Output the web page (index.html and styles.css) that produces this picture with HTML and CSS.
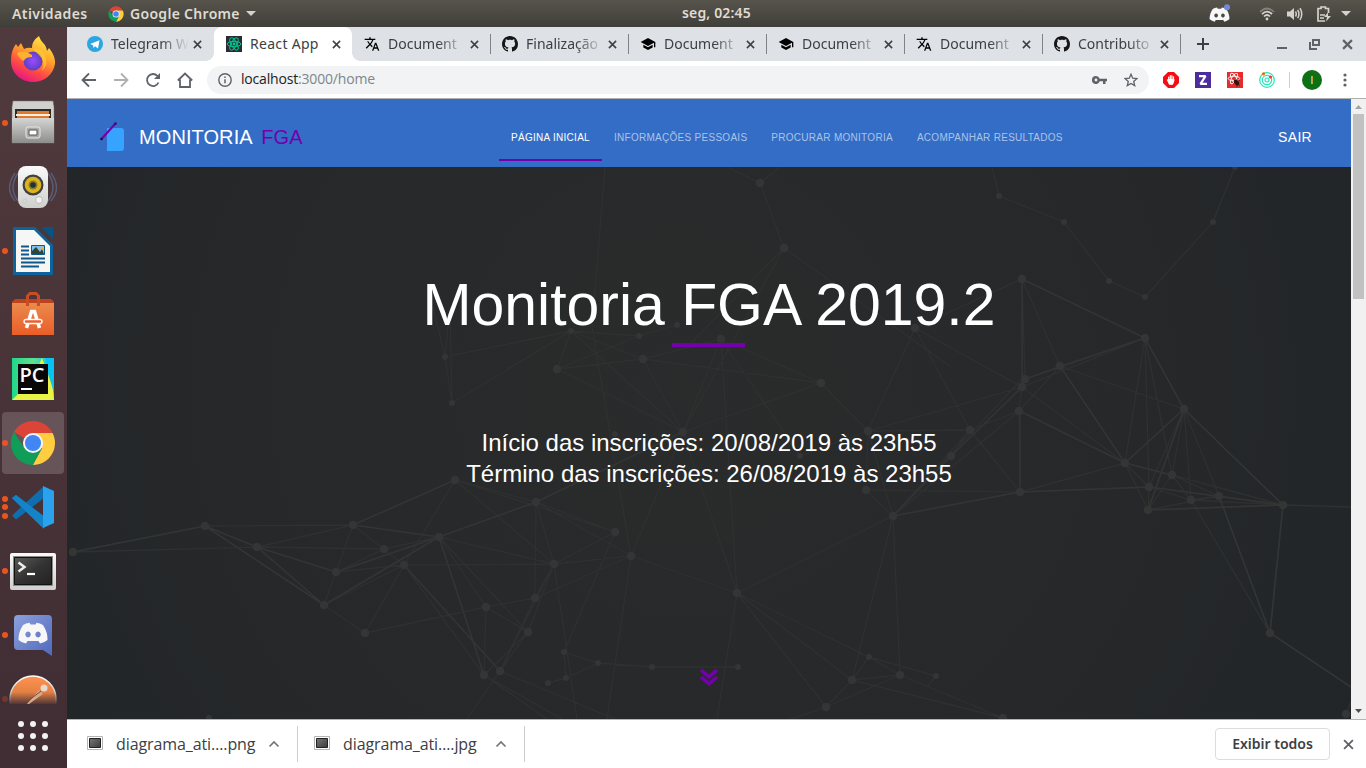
FILE: index.html
```html
<!DOCTYPE html>
<html lang="pt-BR">
<head>
<meta charset="utf-8">
<title>React App</title>
<link rel="stylesheet" href="styles.css">
</head>
<body>
<svg class="defs" width="0" height="0">
  <defs>
    <linearGradient id="ffo" x1=".8" y1="0" x2=".3" y2="1"><stop offset="0" stop-color="#fff04f"/><stop offset=".4" stop-color="#ffa52a"/><stop offset=".72" stop-color="#ff4a43"/><stop offset="1" stop-color="#e5138a"/></linearGradient>
    <radialGradient id="ffp"><stop offset="0" stop-color="#9a4dff"/><stop offset="1" stop-color="#5b3fc4"/></radialGradient>
    <linearGradient id="silver" x1="0" y1="0" x2="0" y2="1"><stop offset="0" stop-color="#d5d5d4"/><stop offset="1" stop-color="#8d8d8c"/></linearGradient>
    <linearGradient id="white" x1="0" y1="0" x2="0" y2="1"><stop offset="0" stop-color="#fafafa"/><stop offset="1" stop-color="#cfcfcd"/></linearGradient>
    <linearGradient id="bag" x1="0" y1="0" x2="0" y2="1"><stop offset="0" stop-color="#ea8a4d"/><stop offset="1" stop-color="#ea5e28"/></linearGradient>
    <linearGradient id="term" x1="0" y1="0" x2="1" y2="1"><stop offset="0" stop-color="#5a5a59"/><stop offset=".5" stop-color="#333"/><stop offset="1" stop-color="#222"/></linearGradient>
    <linearGradient id="thumbnail" x1="0" y1="0" x2="1" y2="1"><stop offset="0" stop-color="#777"/><stop offset="1" stop-color="#3a3a3a"/></linearGradient>
    <linearGradient id="disc" x1="0" y1="0" x2="1" y2="1"><stop offset="0" stop-color="#8ca0dc"/><stop offset="1" stop-color="#5069bb"/></linearGradient>
    <linearGradient id="pyc" x1="0" y1="0" x2="1" y2="0"><stop offset="0" stop-color="#21d789"/><stop offset=".5" stop-color="#5fe08e"/><stop offset="1" stop-color="#07c3f2"/></linearGradient>
    <linearGradient id="post" x1="0" y1="0" x2="0" y2="1"><stop offset="0" stop-color="#ff9350"/><stop offset=".35" stop-color="#e58043"/><stop offset=".62" stop-color="#4a3336"/></linearGradient>
    <linearGradient id="postring" x1="0" y1="0" x2="0" y2="1"><stop offset="0" stop-color="#fff"/><stop offset=".35" stop-color="#ccc"/><stop offset=".62" stop-color="#4a3336"/></linearGradient>
  </defs>
  <symbol id="chrome" viewBox="0 0 48 48">
    <path d="M24 24 4.100 12.500A23 23 0 0 1 43.900 12.500L44 13.500H24z" fill="#db4437"/>
    <path d="M24 13.500H44.400A23 23 0 0 1 23.800 47L33.500 29.200z" fill="#ffcd40"/>
    <path d="M4.100 12.500A23 23 0 0 0 23.800 47L33.300 29.400 24 34.500 14.900 29.300z" fill="#0f9d58"/>
    <circle cx="24" cy="24" r="10.500" fill="#f5f5f5"/><circle cx="24" cy="24" r="8.400" fill="#4285f4"/>
  </symbol>
  <symbol id="x" viewBox="0 0 10 10"><path d="M1 1 9 9M9 1 1 9" fill="none" stroke="currentColor" stroke-width="1.700"/></symbol>
  <symbol id="translate" viewBox="0 0 24 24"><path d="M12.87 15.07l-2.54-2.51.03-.03A17.52 17.52 0 0 0 14.07 6H17V4h-7V2H8v2H1v1.99h11.17C11.5 7.92 10.44 9.75 9 11.35 8.07 10.32 7.3 9.19 6.69 8h-2c.73 1.63 1.73 3.17 2.98 4.56l-5.09 5.02L4 19l5-5 3.11 3.11.76-2.04zM18.5 10h-2L12 22h2l1.12-3h4.75L21 22h2l-4.5-12zm-2.62 7l1.62-4.33L19.12 17h-3.24z"/></symbol>
  <symbol id="github" viewBox="0 0 16 16"><path fill="#161616" d="M8 0C3.58 0 0 3.58 0 8c0 3.54 2.29 6.53 5.47 7.59.4.07.55-.17.55-.38 0-.19-.01-.82-.01-1.49-2.01.37-2.53-.49-2.69-.94-.09-.23-.48-.94-.82-1.13-.28-.15-.68-.52-.01-.53.63-.01 1.08.58 1.23.82.72 1.21 1.87.87 2.33.66.07-.52.28-.87.51-1.07-1.78-.2-3.64-.89-3.64-3.95 0-.87.31-1.59.82-2.15-.08-.2-.36-1.02.08-2.12 0 0 .67-.21 2.2.82.64-.18 1.32-.27 2-.27s1.36.09 2 .27c1.53-1.04 2.2-.82 2.2-.82.44 1.1.16 1.92.08 2.12.51.56.82 1.27.82 2.15 0 3.07-1.87 3.75-3.65 3.95.29.25.54.73.54 1.48 0 1.07-.01 1.93-.01 2.2 0 .21.15.46.55.38A8.01 8.01 0 0 0 16 8c0-4.42-3.58-8-8-8z"/></symbol>
  <symbol id="school" viewBox="0 0 24 24"><path d="M5 13.18v4L12 21l7-3.82v-4L12 17l-7-3.82zM12 3 1 9l11 6 9-4.91V17h2V9L12 3z"/></symbol>
  <symbol id="clyde" viewBox="0 0 30 22"><path fill="#f7f7f7" fill-rule="evenodd" d="M5 3Q8 1 11.500 .8L12.500 2.500H17.500L18.500 .8Q22 1 25 3Q30 11 29.500 18Q26 21 22 21.500L20.500 19H9.500L8 21.500Q4 21 .5 18Q0 11 5 3ZM10 9.500a2.700 3 0 1 0 .1 0zM20 9.500a2.700 3 0 1 0 .1 0z"/></symbol>
  <symbol id="file" viewBox="0 0 16 14"><path fill="#fff" stroke="#b4b4b4" d="M.5.5h15v13H.5z"/><path fill="url(#thumbnail)" stroke="#222" d="M2.500 2.500h11v9h-11z"/></symbol>
  <symbol id="up" viewBox="0 0 12 8"><path d="M1.500 6.500 6 2l4.500 4.500" fill="none" stroke="#757575" stroke-width="1.700"/></symbol>
</svg>

<header class="topbar">
  <span class="activities">Atividades</span>
  <svg class="i16"><use href="#chrome"/></svg>
  <span class="appname">Google Chrome</span>
  <svg class="caret" viewBox="0 0 10 5"><path d="M0 0h10L5 5z"/></svg>
  <span class="clock">seg, 02:45</span>
  <div class="tray">
    <svg width="22" height="20" viewBox="0 0 22 20"><use href="#clyde" x="0" y="3" width="21" height="15"/><circle cx="18" cy="3.200" r="3" fill="#7289da"/></svg>
    <svg class="wifi" width="16" height="14" viewBox="0 0 16 14" fill="none" stroke="#d4d2cc" stroke-width="1.700"><path d="M1 5Q8-2 15 5" opacity=".4"/><path d="M3 7.200Q8 2 13 7.200"/><path d="M5 9.500Q8 6.500 11 9.500"/><circle cx="8" cy="12" r="1.400" fill="#d4d2cc" stroke="none"/></svg>
    <svg class="vol" width="16" height="14" viewBox="0 0 16 14" fill="none" stroke="#d4d2cc" stroke-width="1.500"><path d="M0 4.500h3L7 1v12L3 9.500H0z" fill="#d4d2cc" stroke="none"/><path d="M8.500 4.500q1.500 2.500 0 5M10.700 2.800q2.500 4.200 0 8.400M13 1.200q3.500 5.800 0 11.600"/></svg>
    <svg class="bat" width="14" height="16" viewBox="0 0 14 16" fill="none" stroke="#d4d2cc" stroke-width="1.700"><path d="M11.500 7V2.500H8.500V1H4v1.500H1V15h7M3 9h5M3 12h4"/><path d="M11 6.500 7 11h3l-1 4.500 5-5.500h-3z" fill="#d4d2cc" stroke="none"/></svg>
    <svg class="caret" viewBox="0 0 10 5"><path d="M0 0h10L5 5z"/></svg>
  </div>
</header>

<div class="desktop">
<nav class="dock">
  <div class="app"><svg viewBox="0 0 48 48"><path fill="url(#ffo)" d="M2 26C2 18 4 13 7 9L9 12 12 8 15 14Q19 12 23 13C23 7 26 4 30 1 32 8 37 8 38 16L40 13C45 19 46.500 25 46 29 44 40 35 47 24 47 12 47 2 38 2 26z"/><circle cx="24" cy="26" r="9.500" fill="url(#ffp)"/><path fill="#ffb02f" d="M8 18Q14 14 23 20L23 22Q16 22 15 26 9 23 8 18z"/><path fill="#ffc531" d="M24 14Q32 12 36 20 40 29 33 36 37 26 30 20 27 17 24 14z" opacity=".8"/></svg></div>
  <div class="app run"><svg viewBox="0 0 48 48"><path d="M4 2h40l1 6v36H3V8z" fill="#d0d0cf" stroke="#777" stroke-width=".5"/><path d="M6 10h36v10H6z" fill="#2c2a28"/><path d="M8 12h32v7H8z" fill="#e07a28"/><path d="M7 15h34v2H7z" fill="#f4efe6"/><path d="M3 19h42v25H3z" fill="url(#silver)"/><rect x="17" y="28" width="14" height="11" rx="2" fill="#aaa" stroke="#e9e9e9"/><path d="M20 31h8v5h-8z" fill="#fff" stroke="#555"/></svg></div>
  <div class="app"><svg viewBox="0 0 48 48"><path d="M6 10Q-5 25 6 38M9 10Q-1 25 9 38M42 10Q53 25 42 38M39 10Q49 25 39 38" stroke="#64779f" stroke-width="1.500" fill="none" opacity=".6"/><rect x="9" y="3" width="30" height="42" rx="8" fill="url(#white)"/><circle cx="24" cy="22" r="10.500" fill="#40413f"/><circle cx="24" cy="22" r="8.300" fill="#d9b51b"/><circle cx="24" cy="22" r="4.500" fill="#8b7b2a"/><circle cx="24" cy="22" r="2.800" fill="#26303a"/><circle cx="30" cy="37" r="3.500" fill="#f2f2f2" stroke="#bbb"/><circle cx="16" cy="38" r="2" fill="none" stroke="#ccc"/></svg></div>
  <div class="app run"><svg viewBox="0 0 48 48"><path d="M4 0h22l18 18v30H4z" fill="#0d639e"/><path d="M32 0h12v12z" fill="#075588"/><path d="M7 3h18l16 16v26H7z" fill="#f6f6f5"/><path d="M12 19.500h8M12 23.500h8M12 27.500h8M12 31.500h24M12 35.500h24M12 39.500h18" stroke="#115789" stroke-width="2"/><path d="M22.500 18.500h13v9h-13z" fill="#7ec2ed" stroke="#115789"/><path d="M23 27v-3l4-4 4 5 2-3 2 5z" fill="#343"/><circle cx="33" cy="21" r="1.500" fill="#fa3"/></svg></div>
  <div class="app"><svg viewBox="0 0 48 48"><path d="M3 11l3-3h36l3 3v33H3z" fill="#bd431d"/><path d="M3 12h42v32H3z" fill="url(#bag)"/><path d="M18.500 15V5l2.500-2.500h6L29.500 5v10" fill="none" stroke="#c94c22" stroke-width="3"/><path d="M17.500 37 22.500 20.500h3L30.500 37" fill="none" stroke="#fff" stroke-width="3.500"/><rect x="15" y="28.500" width="18" height="4" rx="2" fill="#e8602e" stroke="#fff" stroke-width="1.300"/></svg></div>
  <div class="app"><svg viewBox="0 0 48 48"><path d="M3 3h42v42H3z" fill="url(#pyc)"/><path d="M33 3 44 33 45 45H3L23 25z" fill="#e7f445"/><path d="M36 3h9v36z" fill="#07c3f2"/><path d="M9 9h30v30H9z" fill="#080808"/><path d="M12 34h11" stroke="#fff" stroke-width="2"/><text x="10.500" y="26.500" class="pc">PC</text></svg></div>
  <div class="app run current"><svg viewBox="0 0 48 48"><use href="#chrome" x="1" y="1" width="46" height="46"/></svg></div>
  <div class="app run run3"><svg viewBox="0 0 48 48"><path d="M3 15 7 12 35 34V46z" fill="#1679b9"/><path d="M3 32.500 7 36.500 35 15V3z" fill="#0e6eaf"/><path d="M3 15 7 12 36 34 33 44z" fill="#1484c8"/><path d="M34 3 45 8V40L34 45z" fill="#2ba2ed"/></svg></div>
  <div class="app run"><svg viewBox="0 0 48 48"><rect x="1" y="6" width="46" height="37" rx="2" fill="url(#white)"/><path d="M4 9h40v30H4z" fill="#8b8b89"/><path d="M5.500 10.500h37v27h-37z" fill="url(#term)" stroke="#111"/><path d="M9.500 15.500 15.500 20l-6 4.500" fill="none" stroke="#eee" stroke-width="2.500"/><path d="M18 27h8" stroke="#fff" stroke-width="2.200"/></svg></div>
  <div class="app run"><svg viewBox="0 0 48 48"><path d="M9 4h30q4 0 4 4v37l-9-6H9q-4 0-4-4V8q0-4 4-4z" fill="url(#disc)"/><use href="#clyde" x="9" y="11" width="30" height="22"/></svg></div>
  <div class="app last"><svg viewBox="0 0 48 48"><circle cx="24" cy="24" r="23" fill="url(#post)" stroke="url(#postring)" stroke-width="1.500"/><path d="M18 29 30 15l4 4-14 10z" fill="#d5a98c"/><circle cx="35" cy="13" r="3.500" fill="#e8d8cc"/><path d="M19 26 32 16" stroke="#7c4a33"/></svg></div>
  <div class="grid"><i></i><i></i><i></i><i></i><i></i><i></i><i></i><i></i><i></i></div>
</nav>

<main class="window">
  <div class="tabs">
    <div class="tab first nosep"><svg class="i16" viewBox="0 0 16 16"><circle cx="8" cy="8" r="8" fill="#2ca5e0"/><path d="M3.200 8 12.500 4.200 11 12.500 8 10.300 6.500 12 6 9.200z" fill="#fff"/></svg><span>Telegram W</span><svg class="close"><use href="#x"/></svg></div>
    <div class="tab active nosep"><svg class="i16" viewBox="0 0 16 16"><path d="M0 0h16v16H0z" fill="#282c34"/><g fill="none" stroke="#00c98d"><ellipse cx="8" cy="8" rx="6.800" ry="2.700"/><ellipse cx="8" cy="8" rx="6.800" ry="2.700" transform="rotate(60 8 8)"/><ellipse cx="8" cy="8" rx="6.800" ry="2.700" transform="rotate(120 8 8)"/></g><circle cx="8" cy="8" r="1.400" fill="#00c98d"/></svg><span>React App</span><svg class="close"><use href="#x"/></svg></div>
    <div class="tab"><svg class="i16"><use href="#translate"/></svg><span>Document</span><svg class="close"><use href="#x"/></svg></div>
    <div class="tab"><svg class="i16"><use href="#github"/></svg><span>Finalização</span><svg class="close"><use href="#x"/></svg></div>
    <div class="tab"><svg class="i16"><use href="#school"/></svg><span>Document</span><svg class="close"><use href="#x"/></svg></div>
    <div class="tab"><svg class="i16"><use href="#school"/></svg><span>Document</span><svg class="close"><use href="#x"/></svg></div>
    <div class="tab"><svg class="i16"><use href="#translate"/></svg><span>Document</span><svg class="close"><use href="#x"/></svg></div>
    <div class="tab"><svg class="i16"><use href="#github"/></svg><span>Contributo</span><svg class="close"><use href="#x"/></svg></div>
    <svg class="plus" viewBox="0 0 12 12"><path d="M6 0v12M0 6h12"/></svg>
    <div class="wm">
      <svg width="10" height="12" viewBox="0 0 10 12"><path d="M0 10h10"/></svg>
      <svg width="11" height="11" viewBox="0 0 11 11"><path d="M4 1h6v5H4zM1 3v7h7"/></svg>
      <svg width="11" height="11" viewBox="0 0 10 10"><path d="M1 1 9 9M9 1 1 9"/></svg>
    </div>
  </div>
  <div class="toolbar">
    <div class="navicons">
      <svg width="16" height="16" viewBox="0 0 16 16"><path d="M15 8H2M8 1.500 1.500 8 8 14.500"/></svg>
      <svg class="off" width="16" height="16" viewBox="0 0 16 16"><path d="M1 8h13M8 1.500 14.500 8 8 14.500"/></svg>
      <svg width="16" height="16" viewBox="0 0 16 16"><path d="M13.500 10.500A6 6 0 1 1 12.500 4"/><path d="M15 1v6H9z" fill="#5f6368" stroke="none"/></svg>
      <svg width="16" height="16" viewBox="0 0 16 16"><path d="M.8 8.500 8 1.500l7.200 7M3 7.500V15h10V7.500"/></svg>
    </div>
    <div class="omnibox">
      <svg width="14" height="14" viewBox="0 0 14 14"><circle cx="7" cy="7" r="6.200" fill="none" stroke="#5f6368" stroke-width="1.400"/><path d="M7 6.200v4M7 3.500v1.500" stroke="#5f6368" stroke-width="1.500"/></svg>
      <span class="url"><b>localhost</b>:3000/home</span>
      <svg class="key" width="15" height="8" viewBox="0 0 15 8"><path d="M4 0a4 4 0 1 0 3.700 5.300H11V8h2.500V5.300H15V2.700H7.700A4 4 0 0 0 4 0zm0 2.600a1.400 1.400 0 1 1 0 2.800 1.400 1.400 0 0 1 0-2.800z" fill="#5f6368"/></svg>
      <svg width="14" height="14" viewBox="0 0 14 14"><path d="M7 1.200 8.700 5.200l4.200.4-3.200 2.800 1 4.200L7 10.400l-3.700 2.200 1-4.200L1.100 5.600l4.200-.4z" fill="none" stroke="#5f6368" stroke-width="1.300"/></svg>
    </div>
    <div class="exts">
      <svg class="i16" viewBox="0 0 16 16"><path d="M5 0h6l5 5v6l-5 5H5l-5-5V5z" fill="#f40d12"/><path d="M5.700 8V5M7.300 8V3.500M8.900 8V3.500M10.500 8V4.800M4.500 8l2 4.200h3L10.800 9V7.500H5.500z" stroke="#fff" stroke-width="1.200" fill="#fff" stroke-linecap="round"/></svg>
      <svg class="i16" viewBox="0 0 16 16"><path d="M0 0h16v16H0z" fill="#4b2d9f"/><path d="M4 4.200h6.500L5.500 11.800H12" fill="none" stroke="#fff" stroke-width="2.200" stroke-linejoin="bevel"/></svg>
      <svg class="i16" viewBox="0 0 16 16"><path d="M0 0h16v16H0z" fill="#e52b2b"/><g fill="none" stroke="#fff" stroke-width=".9"><ellipse cx="7" cy="6.500" rx="5.800" ry="2.300"/><ellipse cx="7" cy="6.500" rx="5.800" ry="2.300" transform="rotate(60 7 6.500)"/><ellipse cx="7" cy="6.500" rx="5.800" ry="2.300" transform="rotate(120 7 6.500)"/></g><ellipse cx="9.500" cy="10.500" rx="2.200" ry="3.200" fill="#311" transform="rotate(-35 9.500 10.500)"/><path d="M6 12l7-4M7 8l6 6M10 7v8" stroke="#311" stroke-width=".7"/></svg>
      <svg class="i16" viewBox="0 0 16 16" fill="none" stroke="#25e5b5" stroke-width="1.200"><circle cx="8" cy="8" r="7.300"/><circle cx="8" cy="8" r="4.700"/><circle cx="8" cy="8" r="2"/><circle cx="4.500" cy="1.800" r="1.600" fill="#f60" stroke="none"/><circle cx="11.500" cy="5" r="1.600" fill="#f33" stroke="none"/></svg>
    </div>
    <div class="vr"></div>
    <div class="avatar">I</div>
    <svg class="more" width="4" height="14" viewBox="0 0 4 14" fill="#5f6368"><circle cx="2" cy="2" r="1.600"/><circle cx="2" cy="7" r="1.600"/><circle cx="2" cy="12" r="1.600"/></svg>
  </div>
  <div class="viewport">
    <div class="page">
      <div class="sitebar">
        <svg class="logo" width="28" height="32" viewBox="0 0 28 32"><path d="M7 6h14q3 0 3 3v17q0 3-3 3H7z" fill="#36a3ff"/><path d="M1.500 17 15.500 1.500" stroke="#7400ad" stroke-width="2.200"/><circle cx="1.500" cy="17" r="1.300" fill="#151525"/><circle cx="15.500" cy="1.500" r="1.300" fill="#301550"/></svg>
        <span class="brand">MONITORIA <em>FGA</em></span>
        <div class="menu"><a class="on">PÁGINA INICIAL</a><a>INFORMAÇÕES PESSOAIS</a><a>PROCURAR MONITORIA</a><a>ACOMPANHAR RESULTADOS</a></div>
        <a class="exit">SAIR</a>
      </div>
      <section class="hero">
        <svg class="net" viewBox="0 0 1284 552">
          <path class="edges" d="M6 385 138 359 190 380 6 385M138 359 286 358 190 380 269 405 257 438 138 359M190 380 317 382 372 370 469 335 388 313 286 358 372 370M190 380 257 438 298 466 337 398 286 358 269 405 317 382M269 405 337 398 487 397 564 389 616 265 576 192 490 202 616 265M269 405 372 370 257 438 337 398 388 313 487 397 372 370 461 465M469 335 487 397 548 365 469 335 564 389 670 426M469 335 616 265 717 81 693 16 660 0M693 16 713 0M388 313 548 365M298 466 419 440 468 431 564 389M372 370 419 440 461 465 433 504 468 431 487 397M419 440 417 508 337 398 433 504 487 397 461 465M372 370 417 508 461 465M469 335 468 431M417 508 480 552M433 504 548 552M417 508 495 552M433 504 400 552M497 485 531 496 585 500 671 500M481 516 499 511 531 496M499 511 497 485M366 140 378 190 385 236 383 140 378 190 504 164 385 236M504 164 572 169 610 158M490 202 504 164M490 202 572 169M504 164 576 192 754 216 654 172 576 192M538 0 525 160 564 389M504 164 616 265M654 172 616 265 754 216 801 264 903 263 848 161 801 264 955 220 848 161 955 112 1078 171 993 199 958 212 955 112 993 199 1117 242 1078 171 955 220 952 244 1058 296 955 220M955 112 955 220M993 199 952 244 903 263 884 289 826 349 801 264 799 323 953 325 903 263M903 263 826 349 953 325 1058 296 1105 308 1152 329 1216 338 1117 242 1078 171 1058 296 1117 242 1082 320 1058 296M953 325 1082 320 953 325M952 244 953 325M1117 242 1081 343 1216 338 1124 333 1105 308 1117 242 1152 329 1203 466 1216 338 1284 340M1117 242 1124 333 1203 466 1284 520M1081 343 1152 329 1124 333 1082 320 1081 343 1105 308 1216 338M1078 171 1082 320 1216 338M1078 171 1105 308M993 199 1058 296 1081 343M955 212 826 349 670 426 654 172 733 289 801 264M670 426 616 265M826 349 785 513 833 508 826 349M801 264 799 323 826 349 952 244M670 426 785 513 759 540 670 426 802 490 785 513 936 551M802 490 869 509 860 520M833 508 759 540 700 560M833 508 936 551M802 490 833 508M925 0 932 29 997 55 1042 114 1078 130 1146 55 1168 0M717 81 620 180M717 81 884 200M548 365 497 485M564 389 540 552M487 397 510 552M487 397 433 504M670 426 650 552M1279 547 1284 535"/>
          <path class="edges strong" d="M6 385 138 359 190 380 257 438M138 359 257 438M190 380 269 405M286 358 388 313M286 358 372 370 469 335M269 405 372 370 257 438M372 370 417 508M337 398 433 504M469 335 616 265M1284 520 1203 466 1216 338 1117 242 1078 171 955 112M1078 171 958 212M955 112V220M953 325V244L1058 296M955 220 884 289 826 349 953 325 1082 320 1216 338 1081 343M1117 242 1058 296 1105 308M1117 242 1081 343M1152 329 1203 466M993 199 1058 296"/>
          <path class="nodes" d="M6 385h0M138 359h0M190 380h0M286 358h0M317 382h0M337 398h0M269 405h0M257 438h0M298 466h0M388 313h0M469 335h0M372 370h0M487 397h0M548 365h0M564 389h0M468 431h0M419 440h0M461 465h0M417 508h0M433 504h0M490 202h0M576 192h0M616 265h0M693 16h0M717 81h0M955 112h0M1078 171h0M993 199h0M958 212h0M955 220h0M952 244h0M1117 242h0M1058 296h0M1105 308h0M1082 320h0M1124 333h0M1081 343h0M1152 329h0M1216 338h0M1203 466h0M754 216h0M801 264h0M903 263h0M884 289h0M953 325h0M826 349h0M799 323h0M848 161h0M654 172h0M670 426h0M833 508h0M785 513h0M759 540h0M936 551h0M1279 547h0"/>
          <path class="nodes small" d="M378 190h0M385 236h0M504 164h0M572 169h0M610 158h0M497 485h0M531 496h0M585 500h0M481 516h0M499 511h0M671 500h0M932 29h0M997 55h0M1042 114h0M1078 130h0M1146 55h0M1168 0h0M802 490h0M869 509h0M733 289h0M142 551h0M548 267h0"/>
        </svg>
        <h1>Monitoria FGA 2019.2</h1>
        <div class="rule"></div>
        <p>Início das inscrições: 20/08/2019 às 23h55<br>Término das inscrições: 26/08/2019 às 23h55</p>
        <svg class="down" width="20" height="18" viewBox="0 0 20 18"><path d="M2 2 10 8.800 18 2M2 9 10 15.800 18 9"/></svg>
      </section>
    </div>
    <div class="scroll"><svg width="7" height="4" viewBox="0 0 7 4"><path d="M0 4h7L3.500 0z" fill="#a3a3a3"/></svg><div class="thumb"></div><svg class="sd" width="7" height="4" viewBox="0 0 7 4"><path d="M0 0h7L3.500 4z" fill="#505050"/></svg></div>
  </div>
  <footer class="downloads">
    <div class="dl"><svg class="fi"><use href="#file"/></svg><span>diagrama_ati….png</span><svg class="up"><use href="#up"/></svg></div>
    <div class="dl"><svg class="fi"><use href="#file"/></svg><span>diagrama_ati….jpg</span><svg class="up"><use href="#up"/></svg></div>
    <button class="all">Exibir todos</button>
    <svg class="dx" width="11" height="11"><use href="#x"/></svg>
  </footer>
</main>
</div>
</body>
</html>
```
FILE: styles.css
```css
* { box-sizing: border-box; }
body { margin: 0; width: 1366px; height: 768px; overflow: hidden; font-family: "Open Sans", "Noto Sans", sans-serif; background: #422f35; }
svg { display: block; flex: none; }
.defs { position: absolute; }
.i16 { width: 16px; height: 16px; }

.topbar { height: 27px; display: flex; align-items: center; padding: 0 15px 0 12px; position: relative; background: linear-gradient(#57544c, #403e39); color: #dfdbd2; font: 600 14px/27px "Noto Sans", sans-serif; }
.activities { width: 96px; white-space: nowrap; letter-spacing: .42px; }
.appname { width: 111px; margin-left: 6px; margin-right: 5px; white-space: nowrap; letter-spacing: .3px; }
.caret { width: 10px; height: 5px; fill: #d4d2cc; }
.clock { position: absolute; left: 682px; top: -1px; letter-spacing: .15px; }
.tray { margin-left: auto; display: flex; align-items: center; }
.wifi { margin-left: 28px; }
.vol { margin-left: 12px; }
.bat { margin-left: 14px; margin-right: 10px; }

.desktop { display: flex; height: 741px; }
.dock { width: 67px; display: flex; flex-direction: column; padding: 1px 2px 0; background: linear-gradient(#503a3d, #483338 50%, #402e34); }
.app { height: 62px; margin-bottom: 2px; flex: none; display: flex; align-items: center; padding-left: 7px; border-radius: 4px; position: relative; width: 62px; }
.app svg { width: 48px; height: 48px; }
.app.run::before { content: ""; position: absolute; left: 0; top: 28px; width: 6px; height: 6px; border-radius: 50%; background: #e95420; }
.app.run3::before { box-shadow: 0 -8px #e95420, 0 9px #e95420; }
.app.current { background: #675458; }
.app.last { height: 36px; overflow: hidden; align-items: flex-start; padding-top: 7px; }
.app.last::before { content: ""; position: absolute; left: 0; top: 28px; width: 6px; height: 6px; border-radius: 50%; background: #73382c; }
.pc { font: 600 20px "Open Sans", sans-serif; fill: #fff; }
.grid { display: grid; grid-template-columns: repeat(3, 6px); gap: 6px; padding: 15px 0 0 16px; }
.grid i { width: 6px; height: 6px; border-radius: 50%; background: #f3f2f1; }

.window { width: 1299px; display: flex; flex-direction: column; background: #fff; }
.tabs { height: 34px; flex: none; display: flex; align-items: center; padding-left: 9px; background: #dee1e6; color: #3c4043; }
.tab { width: 138px; height: 34px; flex: none; display: flex; align-items: center; padding-left: 12px; position: relative; }
.tab.first { padding-left: 11px; }
.tab span { width: 78px; margin-left: 8px; white-space: nowrap; font: 14px/34px "Noto Sans", sans-serif; -webkit-mask-image: linear-gradient(90deg, #000 50px, transparent 78px); }
.tab .close { width: 9px; height: 9px; margin-left: 4px; }
.tab:not(.nosep)::after { content: ""; position: absolute; right: -1px; top: 7px; width: 1px; height: 20px; background: #808387; }
.tab.active { background: #fff; border-radius: 8px 8px 0 0; }
.tab.active::before { content: ""; position: absolute; left: -8px; right: -8px; bottom: 0; height: 8px; background: radial-gradient(circle at 0 0, transparent 7.500px, #fff 8px) left / 8px 8px no-repeat, radial-gradient(circle at 100% 0, transparent 7.500px, #fff 8px) right / 8px 8px no-repeat; }
.tab.active span { -webkit-mask-image: none; letter-spacing: .3px; }
.plus { width: 12px; height: 12px; margin-left: 17px; stroke: #3c4043; stroke-width: 2; }
.wm { margin-left: auto; margin-right: 13px; display: flex; align-items: center; gap: 22px; fill: none; stroke: #5f6368; stroke-width: 2; }

.toolbar { height: 38px; flex: none; display: flex; align-items: center; border-bottom: 1px solid #b0b0b0; padding-left: 14px; }
.navicons { display: flex; gap: 16px; fill: none; stroke: #5f6368; stroke-width: 1.800; }
.off { opacity: .5; }
.omnibox { margin-left: 14px; width: 942px; height: 28px; border-radius: 14px; background: #f1f3f4; display: flex; align-items: center; padding: 0 11px; }
.url { margin-left: 9px; margin-right: auto; margin-top: -2px; font-size: 14px; letter-spacing: -.18px; color: #80868b; }
.url b { font-weight: 400; color: #202124; }
.key { margin-right: 17px; }
.exts { display: flex; gap: 16px; margin-left: 14px; }
.vr { width: 1px; height: 16px; margin: 0 12px 0 14px; background: #ccc; }
.avatar { width: 20px; height: 20px; border-radius: 50%; background: #0d7014; color: #fff; font-size: 10px; line-height: 20px; text-align: center; }
.more { margin-left: 21px; }

.viewport { height: 620px; flex: none; display: flex; }
.page { width: 1284px; font-family: "Liberation Sans", Arial, sans-serif; }
.sitebar { height: 68px; display: flex; align-items: center; padding-left: 33px; background: #336dc6; }
.logo { margin-top: 10px; }
.brand { width: 360px; margin-left: 11px; margin-top: 8px; line-height: 24px; font-size: 20px; letter-spacing: .08px; color: #fff; }
.brand em { font-style: normal; color: #7400ad; margin-left: 4px; }
.menu { display: flex; align-self: flex-end; margin-bottom: 6px; }
.menu a { height: 48px; padding: 0 12px; line-height: 49px; font-size: 10px; letter-spacing: .28px; color: #abc3e8; border-bottom: 2px solid transparent; white-space: nowrap; }
.menu a.on { color: #fff; border-color: #7400ad; }
.exit { margin-left: auto; margin-right: 39px; margin-top: 8px; font-size: 14px; line-height: 20px; letter-spacing: .3px; color: #fff; }
.hero { height: 552px; position: relative; overflow: hidden; display: flex; flex-direction: column; align-items: center; color: #fff; background: radial-gradient(ellipse 800px 800px at 48% 40%, #2a2b2b, #27282a 55%, #202528 100%); }
.net { position: absolute; left: 0; top: 0; width: 1284px; height: 552px; }
.edges { fill: none; stroke: #2f3030; stroke-width: 1.300; }
.edges.strong { stroke: #333434; stroke-width: 1.600; }
.nodes { fill: none; stroke: #343535; stroke-width: 8.500; stroke-linecap: round; }
.nodes.small { stroke-width: 6; }
h1, p, .rule, .down { position: relative; }
h1 { margin: 103px 0 0; font-weight: 400; font-size: 58.900px; line-height: 70px; }
.rule { width: 73px; height: 4px; margin-top: 3px; margin-right: 1px; background: #7400ad; }
p { margin: 80px 0 0; font-size: 24px; line-height: 31px; text-align: center; }
.down { margin-top: 179px; fill: none; stroke: #7400ad; stroke-width: 3.600; }
.scroll { width: 15px; background: #f1f1f1; display: flex; flex-direction: column; align-items: center; padding-top: 6px; }
.thumb { width: 11px; height: 185px; margin-top: 5px; background: #c1c1c1; }
.sd { margin-top: auto; margin-bottom: 6px; }

.downloads { height: 49px; border-top: 1px solid #b5b5b5; display: flex; align-items: center; padding-right: 12px; }
.dl { display: flex; align-items: center; height: 36px; padding-left: 20px; border-right: 1px solid #ccc; font-size: 16px; letter-spacing: -.1px; color: #3c4043; width: 231px; }
.dl + .dl { width: 227px; padding-left: 16px; }
.dl span { margin-left: 13px; white-space: nowrap; width: 140px; }
.fi { width: 16px; height: 14px; margin-top: -3px; }
.up { width: 12px; height: 8px; margin-left: 12px; }
.all { margin-left: auto; width: 115px; height: 32px; border: 1px solid #dadce0; border-radius: 4px; background: #fff; padding: 0 0 2px; font: 600 14px "Noto Sans", sans-serif; color: #3c4043; }
.dx { margin-left: 13px; color: #5f6368; }
```
